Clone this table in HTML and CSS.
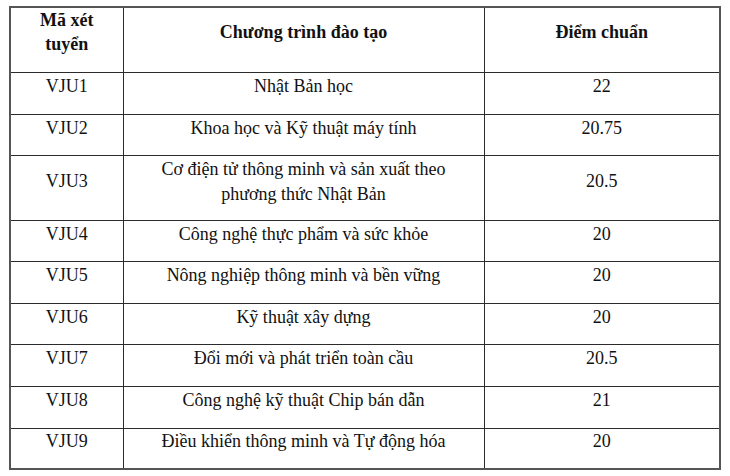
FILE: index.html
```html
<!DOCTYPE html>
<html lang="vi">
<head>
<meta charset="utf-8">
<title>Điểm chuẩn VJU</title>
<link rel="stylesheet" href="styles.css">
</head>
<body>
<table class="score-table">
  <colgroup>
    <col class="col-code">
    <col class="col-program">
    <col class="col-score">
  </colgroup>
  <thead>
    <tr class="row-head">
      <th>Mã xét<br>tuyển</th>
      <th>Chương trình đào tạo</th>
      <th>Điểm chuẩn</th>
    </tr>
  </thead>
  <tbody>
    <tr class="row-a"><td>VJU1</td><td>Nhật Bản học</td><td>22</td></tr>
    <tr class="row-b"><td>VJU2</td><td>Khoa học và Kỹ thuật máy tính</td><td>20.75</td></tr>
    <tr class="row-double"><td>VJU3</td><td>Cơ điện tử thông minh và sản xuất theo<br>phương thức Nhật Bản</td><td>20.5</td></tr>
    <tr class="row-b"><td>VJU4</td><td>Công nghệ thực phẩm và sức khỏe</td><td>20</td></tr>
    <tr class="row-a"><td>VJU5</td><td>Nông nghiệp thông minh và bền vững</td><td>20</td></tr>
    <tr class="row-b"><td>VJU6</td><td>Kỹ thuật xây dựng</td><td>20</td></tr>
    <tr class="row-a"><td>VJU7</td><td>Đổi mới và phát triển toàn cầu</td><td>20.5</td></tr>
    <tr class="row-a"><td>VJU8</td><td>Công nghệ kỹ thuật Chip bán dẫn</td><td>21</td></tr>
    <tr class="row-c"><td>VJU9</td><td>Điều khiển thông minh và Tự động hóa</td><td>20</td></tr>
  </tbody>
</table>
</body>
</html>
```

FILE: styles.css
```css
html, body {
  background: #ffffff;
}

body {
  margin: 6px 0 0 9px;
  font-family: "Liberation Serif", "Times New Roman", serif;
  font-size: 18px;
  color: #111111;
}

.score-table {
  border-collapse: collapse;
  table-layout: fixed;
  width: 712px;
  border: 2px solid #555555;
}

.col-code { width: 113px; }
.col-program { width: 361px; }
.col-score { width: 236px; }

.score-table th,
.score-table td {
  border: 1px solid #2b2b2b;
  text-align: center;
  vertical-align: middle;
  padding: 0 4px 15px;
  line-height: 24px;
}

.score-table th {
  font-weight: bold;
  padding-bottom: 16px;
}

.row-double td {
  line-height: 25px;
  padding-bottom: 13px;
}

.row-head { height: 65px; }
.row-double { height: 65px; }
.row-a { height: 42px; }
.row-b { height: 41px; }
.row-c { height: 40px; }
```
